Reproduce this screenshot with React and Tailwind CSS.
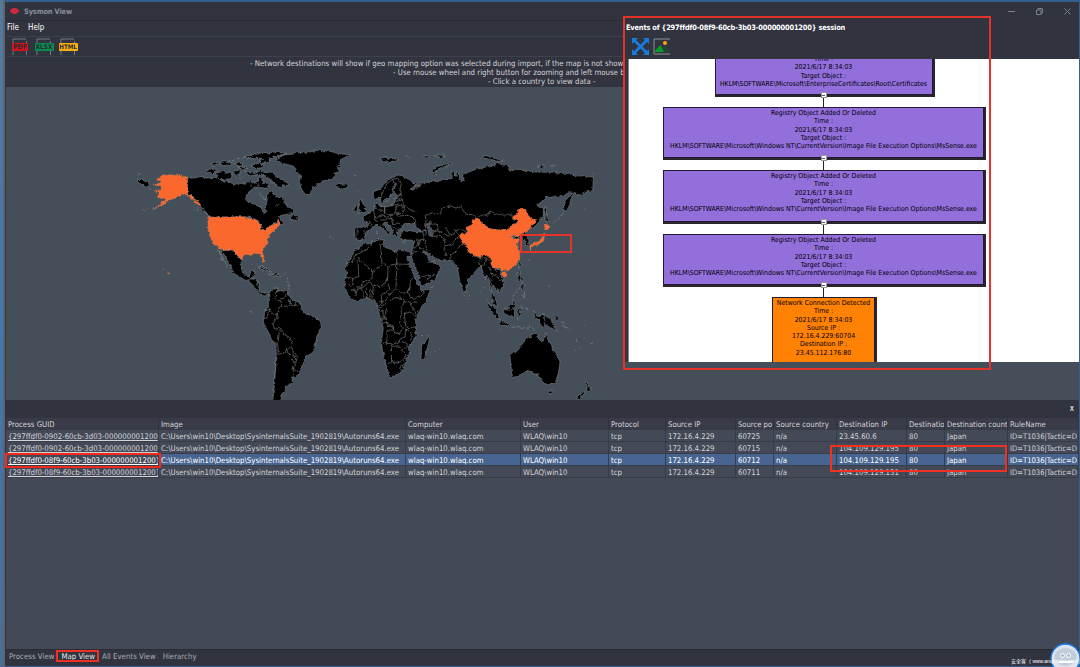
import React from "react";

const LAND = "fill-black stroke-[#8b8f92] [stroke-width:1.5]";
const HOT = "fill-[#fa682d] stroke-[#e98a62] [stroke-width:1]";
const LINE = "fill-none stroke-[#858585] [stroke-width:1.8]";
const ISLES = "fill-black stroke-[#989c9f] [stroke-width:1.5]";
const SEA = "fill-[#454f59] stroke-[#8b8f92] [stroke-width:1]";

function WorldMap() {
  return (
    <svg className="block h-[312px] w-[617px] shrink-0" viewBox="6 88 617 312">
      <defs>
        {/* Roughens the coast lines */}
        <filter id="coast" x="-5%" y="-5%" width="110%" height="110%">
          <feTurbulence type="fractalNoise" baseFrequency="0.09" numOctaves="3" seed="4" />
          <feDisplacementMap in="SourceGraphic" scale="11" xChannelSelector="R" yChannelSelector="G" />
        </filter>
      </defs>

      {/* North America */}
      <g transform="translate(130 140) scale(.33333)" strokeLinejoin="round" filter="url(#coast)">
        <polygon className={LAND} points="172,111 185,115 212,110 232,114 262,112 275,122 300,125 310,135 330,130 345,133 358,125 382,125 390,108 398,112 400,130 418,130 410,145 385,142 370,145 352,160 347,175 355,188 375,193 390,200 400,220 408,215 406,200 412,180 410,165 425,152 438,170 455,170 460,182 472,200 492,208 490,220 462,224 445,228 455,240 462,252 448,255 445,242 435,248 422,258 405,268 393,272 394,255 385,242 360,232 345,230 243,231 232,222 218,205 205,190 190,170 172,165" />
        <polygon className={HOT} points="172,111 172,165 160,163 148,168 135,172 125,182 120,178 105,190 68,208 95,190 110,178 100,176 82,170 88,158 76,153 92,146 94,140 72,134 85,130 95,125 78,118 95,108 120,104 150,108" />
        <path className={HOT} d="M173 165l14 4 10 12 10 7 6 8-10-2-8-10-12-10zM98 386l5 2M108 390l4 2M115 395l3 4-2 5-3-3zM38 213l6-2M52 206l8-1M120 184l5-6M55 146l8 2" />
        <polygon className={HOT} points="233,232 345,231 350,234 375,238 390,250 394,270 405,268 425,256 440,250 445,240 451,252 440,262 430,272 420,282 412,298 418,305 408,318 398,325 396,335 402,350 400,368 394,355 390,342 375,338 365,345 345,343 338,352 335,365 325,350 316,340 308,330 280,332 250,312 240,290 235,270" />
        <polygon className={LAND} points="272,328 280,332 308,330 316,340 325,350 333,362 335,390 345,408 358,410 362,395 375,390 372,408 362,415 364,420 385,425 390,445 375,440 355,422 345,420 325,408 308,398 305,382 290,355" />
        <path className={LINE} d="M263 326l8 16 8 20 14 18M267 330l10 22 10 18" />
        <path className={ISLES} d="M389 380l12 0 12 6 12 10-8-2-12-8-9-2zM430 400l14 1 10 8-12-1-10-2zM416 403l8 2M463 401l4 1M472 412l2 7M477 432l1 6M432 445l7-3 8 2M598 290h4M610 295h4" />
        {/* Arctic islands */}
        <path className={ISLES} d="M232 92l15-7 15 5-5 6-14 5-12-3zM256 100l24-6 8 6 14-4 4 12-3 8-26 3-19-5 6-8-8-3zM313 94l12-3 5 10-8 4 12 12-12-6zM345 96l14-2 14 7 18-9 14 6 20-2 6 8 10 9 8-2 10 12 10 3 8 7-7 4-13-3 2 9-12-3-15-12-12-4 6-5-12-8-5 4-8-10-22-2-8 6-14-3zM360 128l16 0 12 9-9 5-14-2zM242 72l12-5 10 3-8 8zM268 68l22-4 18 5-9 6-24 2zM314 73l9-5 14 4-6 7zM325 82l17-3 12 4-14 5zM340 52l22-7 21-3 16-5 20 2 27-5 21 6-16 6-13 0-12 9-12 2 5 5-10 7-15-1-7-6 11-4-20-6-16 3zM363 76l24-6 16 7-7 6-16 2zM302 59l14 1M318 53l12 3M298 66l4-3" />
        <polygon className={LAND} points="438,56 465,45 490,42 500,38 530,37 565,31 600,34 620,40 660,44 640,55 632,58 630,72 622,80 628,95 612,100 618,108 598,118 580,122 560,135 545,148 540,164 525,162 515,148 508,125 512,108 500,95 495,80 475,74 450,68" />
        <path className={LAND} d="M616 136l9-5 15 2 12-2 3 7-10 7-15 2-10-4zM22 117l11 2 20 8 5 6-4 7-10-4-10-4-10-5zM482 232l8-9 6 6 10 7-5 6-18-4z" />
        <path className={ISLES} d="M24 101l8 1M672 103h4M214 198l10 12 8 14-10-10M200 202l4 12M448 196l-10 2M404 180l-14-24" />
      </g>

      {/* Europe and Asia */}
      <g transform="translate(330 140) scale(.33333)" strokeLinejoin="round" filter="url(#coast)">
        <polygon className={LAND} points="130,155 130,170 138,178 150,172 155,188 162,184 172,172 190,165 196,185 190,197 165,200 148,200 144,190 136,192 134,206 122,215 108,225 98,232 102,240 112,246 112,262 78,262 73,270 76,295 88,301 100,298 108,280 125,264 138,256 150,258 158,266 172,277 172,285 181,280 170,266 158,252 165,246 180,258 187,270 190,285 200,288 200,274 212,270 214,262 224,250 238,252 252,250 262,262 278,276 262,276 240,272 214,276 211,292 220,300 240,300 252,302 250,318 246,335 243,350 256,380 268,410 272,440 315,420 332,382 318,368 300,365 292,350 280,335 284,333 305,347 330,362 345,362 370,365 382,378 385,400 390,425 398,450 403,465 411,440 413,420 435,395 450,378 470,390 480,378 520,380 560,340 560,300 590,275 598,268 612,262 628,245 640,225 640,205 622,198 625,192 640,182 650,172 680,170 700,168 712,160 722,155 730,158 720,168 706,180 700,195 703,215 717,202 722,180 728,165 735,158 750,165 760,158 788,152 790,112 760,108 735,108 715,100 690,100 665,97 640,97 610,96 595,92 575,92 560,88 535,92 540,78 520,75 505,68 495,75 480,78 455,84 430,90 415,98 400,102 398,110 403,120 393,125 388,112 385,98 380,95 378,110 370,95 365,98 367,115 355,117 340,118 325,125 310,122 290,127 275,130 270,140 258,142 250,150 240,148 258,135 245,125 235,118 215,108 205,105 190,112 175,120 160,135 150,148" />
        <polygon className={SEA} points="176,186 180,165 188,155 186,145 192,132 200,130 200,138 192,150 195,163 218,162 205,169 198,176 193,192 170,200 150,198 160,189 172,180" />
        <polygon className={SEA} points="288,250 300,244 306,250 300,258 310,275 308,290 298,288 293,270" />
        <polygon className={LAND} points="440,232 452,226 463,224 470,228 482,214 500,222 520,226 545,222 548,238 565,245 548,255 535,268 500,270 480,266 455,250" />
        <polygon className={HOT} points="388,286 410,278 408,262 425,256 427,243 438,232 450,240 455,250 480,266 500,270 535,268 548,255 560,250 565,243 548,238 550,228 563,222 562,210 575,205 588,210 595,226 604,236 617,238 614,250 604,258 598,268 590,275 583,280 573,282 566,290 557,288 554,295 568,298 557,310 568,330 569,352 560,370 545,384 528,392 515,388 508,383 495,388 486,385 480,378 483,362 478,350 466,344 452,352 430,346 415,336 410,318 395,305" />
        <polygon className={SEA} points="540,290 556,286 560,290 554,297 546,296" />
        <polygon className={LAND} points="573,282 590,277 591,290 597,300 595,315 588,318 585,302 578,292" />
        <path className={HOT} d="M642 256l8-3 10 7-8 10-8-2zM641 276l2 14-3 14-12 6-8 8-14 1-4 9-4-10 12-10 15-2 12-14zM518 397l9-2 1 10-5 7-5-6z" />
        {/* Britain, Iceland, Greenland's east tip and Arctic islands */}
        <path className={LAND} d="M88 184l9-6 0 12 8 8 5 14-7 6-20 2 9-9-3-9-4-5zM70 204l8-6 5 5-4 10-10 3z" />
        <path className={ISLES} d="M150 55l18-3 12 5 20-3 6 5-18 4-12 6-10-4-12 0zM226 49l10 2M278 49l14-2 8 4M310 48l16-3 20 3-12 4zM454 50l16-3 20 7 20 5 8 6-20-2-18-5-12-2zM622 78l14-2 12 3-14 3zM660 78l16 0M700 96l8 2M306 98l2-10 12-8 24-7 22-3 2 3-22 6-18 7-10 8-2 6 8 5-8-1zM790 105l0-5M645 200l4 9-1 20 5 14-4 5-4-9 1-17-4-12zM666 252l6-5M676 244l5-5M684 237l6-7M692 228l8-9M762 206l5 2M656 437h3M565 350l6-2M594 360l3 1M565 368l6 5-4 12zM566 403l7 6-3 16-5-8M136 296l10-2-2 6M140 272l1 10M216 306l10 1M80 153h3M8 296h3M60 305l4 1" />
        {/* National borders */}
        <path className={LINE} d="M152 172l8-18 10-22 18-14 18-4M206 116l8 14-4 18 6 16M188 118l6 16M130 206l4 18 0 16 10 6M134 206l12 0 18 8 0-14M164 214l-8 14-22 6M164 200l0 18 14 6 16-2 4-20M196 200l20-6 8 14-6 12-22 0M196 222l10 6 28-2 20 8 4 16M156 228l16 4 20-8M150 240l16 0 18-6 8 10M184 234l4 16 22 0M190 250l-8 10M188 262l14 6 12-2M196 185l20-5M194 176l20-2M190 196l18-4M216 165l4 30 20 14 16 6M112 246l16 10M100 268l6 14M82 268l-2 30M212 276l4-6M252 302l16-2 14-2 0-12-4-10M268 300l-4 18-14 6M282 298l6 20 4 16M264 318l18 16M246 338l18-6M270 270l20 6-6 12M284 276l4-26-2-24 20-8 26 4 2-16 28-8 16 6 14-4 14 22 18 2 14 8M306 252l16 0 2 20-14 4M324 272l16 8 14 8 16-4 6-12 32-2M310 290l18-4 14 8M342 294l4 22-4 12 6 20M346 318l18-4 14-18 10-8M358 362l6-18 16-12 12-18 16-2M360 284l-14-22M376 272l12 14M296 368l22-6M290 420l22-16M274 410l18-4 22 0M420 340l14 10 22 4M456 356l14-4M470 354l2 20M450 356l-2 18 10 4M480 376l-8 20M482 214l-16 12" />
      </g>

      {/* South America and Africa */}
      <g transform="translate(220 260) scale(.33333)" strokeLinejoin="round" filter="url(#coast)">
        <polygon className={LAND} points="148,98 160,88 175,85 170,95 182,92 203,95 205,105 218,120 240,128 242,145 255,160 280,170 300,182 304,198 290,230 285,260 278,278 255,292 250,310 237,335 232,350 218,350 216,360 218,372 195,380 198,388 188,395 185,412 178,426 157,426 158,395 162,365 167,320 170,252 155,240 145,215 132,195 130,180 135,155 145,140 145,118" />
        <polygon className={LAND} points="82,60 94,56 112,62 112,84 120,96 136,100 146,98 144,106 132,108 122,102 108,88 98,74" />
        <path className={LINE} d="M171 92l-5 10 2 17 15 4 2 17-11 5-4 20-11-4-16-15M180 117l12-2 8-12 5-8M190 140l18-4 4-15M205 115l10 21 9 2 4-14M223 135l12 1M134 152l12-2 6-7M146 155l-6 20-8-2M174 152l-4 22-11 18 5 15 14-1 7 4M178 210l-2 22-3 20 2 22-3 12-4 20-4 60-4 46M186 210l4 12 20 11 6 15-3 15-12 2-6 14-20 4M200 266l4 12 16 8 8 14-6 10-6-16M216 264l4 14 12 10-4 22-8 14 0 22M220 325l16 11" />
        <path className={ISLES} d="M115 21l14 2 15 9-9 0-12-6zM155 41l12 1 7 4-14 2zM176 46l6 1M203 63l2 10M207 82l0 7M89 155l8 1M344 66h4M140 40l6 2" />
        <polygon className={LAND} points="430,-50 450,-48 475,-60 492,-60 490,-46 495,-38 512,-32 525,-22 535,-30 548,-28 570,-24 574,-12 560,-10 568,15 580,40 588,65 600,82 605,92 630,88 628,102 610,135 595,155 588,172 587,195 588,228 575,250 565,260 568,280 558,300 552,320 540,340 512,350 506,345 500,320 488,275 484,245 490,205 485,180 478,165 474,145 470,125 455,118 440,112 405,125 385,105 376,85 374,68 380,40 376,22 392,-5 405,-30 425,-42" />
        <path className={LINE} d="M377 10l20-4 5-17 28-15 26-19-2-18M410-8l48 42-2 22-24 8-12 18-10-2M414 0l2 50-20 6M378 52l18 2 3 20-12 4M390 92l14-5 4 14M404 110l9-24 15 0 3 30M425 70l2 17M438 86l5 26M449 86l2 31M430 82l16-16 14 12-4 38M460 34l30-22 14 8-1 30-9 22-15 8-19-4M486 16l-2-42-3-18 10-6M504 18l24-6 40 1M530-25v51M503 50l-1 20 8 17-13 12-13 4 2 30-10 7M530 26l-2 60-16 12-14 23-21 5M528 87l18 12 14-1 10-18 2-20 10-8M574 78l-12 18 9 15 12 4 17-4 14-14M510 122l18-10 22 5 7 13 12-4M552 126l-8 22 0 29-6 12 9 14-6 18-17-2-5-18-17-2-3-24-14-4M470 136l14 8 14-18M480 162l9-12 1 25M500 144l-7 30-9 10M552 160l18-4 16 10M570 128l8 15 10 18M553 158l4 43 16 2 14-2M489 189l14-3 3 9 14 2M520 194l0 16-19 1-1 44M487 250l30 1 17-3 8-12 13-5 2-25M514 253l1 53-12 6M517 260l18-3 12 17 12 5-6 16-10 10-20 7-8-15M545 242l16 9 1 12-15 3M560 206l14 14-2 20M578 130l14-2M541 318l6-3 2 7-6 6-4-4z" />
        <polygon className={LAND} points="625,228 628,240 618,280 612,298 603,295 605,255 620,240" />
        <path className={ISLES} d="M656 266l2 2M646 273l3 1M457 151l2 1M606 226h3" />
      </g>

      {/* South-east Asia and Oceania */}
      <g transform="translate(400 230) scale(.33333)" strokeLinejoin="round" filter="url(#coast)">
        <polygon className={LAND} points="244,108 255,100 262,86 272,96 276,112 290,116 303,122 300,135 310,150 310,170 300,185 295,188 297,175 288,178 280,165 275,160 272,185 282,200 290,215 292,232 282,222 275,200 270,180 268,150 260,135 258,150 250,130" />
        <polygon className={LAND} points="330,375 355,360 365,345 378,325 395,323 392,315 405,310 415,315 412,325 425,335 433,330 437,308 443,328 455,345 458,362 472,378 480,395 475,430 465,460 445,464 430,460 422,445 415,440 412,430 405,436 398,425 385,423 365,428 355,438 338,442 335,430" />
        <polygon className={LAND} points="400,246 410,258 420,260 425,254 440,258 452,266 458,282 470,302 455,294 442,284 432,290 420,282 418,270 404,262" />
        <path className={LAND} d="M448 480l11 0-3 10-6 2zM559 455l5 8 2 8 8 1-10 14-4-6 2-10-6-9zM546 484l9 0-9 12-6 10-10 1 2-8 7-5zM261 211l9 9 12 16 12 15 5 18-10-6-12-18-12-17zM300 273l18 5 11 6 4 5-20-3-12-6zM312 237l14-2 12-12 2-16 6 10-4 12 2 12-3 19-14-2-11-9zM202 188l5 6 0 10-4 3z" />
        <path className={ISLES} d="M350 250l3-12 14-3M355 249l10 1-5 6 3 14M352 262l2 9M363 230l5 2M336 289l10 3M350 290l8 1M362 296l12-3M381 295l9-7M368 158l-6 12 6 14M361 140l8 3 0 17 6 8M374 184l-3 20M364 195l8 6 7 3M355 175l-8 14M344 193l-3 6M380 231l3 10M374 240l-4 4M396 244l8 1M398 292l5 8M467 255l8 8-5 12M483 275l8 4M488 284l5 7M496 291l8 3M505 298l7 6M528 328l4 9M540 350l-2 6M522 357l6 10M571 343l8-6M555 441l3 8M248 173l4 1M241 184h2M446 166h3M550 286l3 1M356 123l2 10-4 4 0-10M92 172l9-2M298 300l3 2" />
        <path className={LINE} d="M434 258v30M312 237l16 5 10-10M268 110l8 20 14 6 6 14 12 2M276 130l-4 30M284 112l6 18" />
      </g>
    </svg>
  );
}

function FormatIcon({ label, card }) {
  return (
    <div className="relative flex h-[18px] w-[20px] items-center justify-center">
      <svg viewBox="0 0 20 18" className="absolute inset-0 h-full w-full">
        <path d="M3 17V1h13M16.500 3v14" className="fill-none stroke-[#737980]" />
      </svg>
      <span className={"relative flex h-[8px] shrink-0 items-center justify-center rounded-[1px] font-bold leading-[8px] text-[#292b2e] " + card}>
        {label}
      </span>
    </div>
  );
}

function NodeBox({ lines, box, height }) {
  return (
    <div className={"relative shrink-0 border border-[#241a35] pt-[1px] text-center text-[6.9px] leading-[8.3px] text-black [box-shadow:1px_1px_0_1px_#28252d] " + box + " " + height}>
      {lines.map((line, i) => (
        <div key={i} className="whitespace-nowrap">{line}</div>
      ))}
    </div>
  );
}

function Connector() {
  return (
    <div className="relative z-10 flex h-[12px] w-[6px] shrink-0 justify-center">
      <div className="w-px bg-[#222]" />
      <div className="absolute -top-[3px] left-0 flex h-[6px] w-[6px] items-center justify-center border border-[#999] bg-white">
        <div className="h-px w-[3px] bg-[#557]" />
      </div>
    </div>
  );
}

const registry = [
  "Registry Object Added Or Deleted",
  "Time :",
  "2021/6/17 8:34:03",
  "Target Object :",
  "HKLM\\SOFTWARE\\Microsoft\\Windows NT\\CurrentVersion\\Image File Execution Options\\MsSense.exe",
];

function EventsPanel() {
  return (
    <section className="relative flex min-w-0 flex-1 flex-col">
      <div className="absolute -top-[68px] right-0 left-[2px] flex h-[342px] flex-col bg-[#31343f]">
        <h2 className="mt-[3px] ml-[1px] h-[15px] text-[7.4px] leading-[10px] font-bold tracking-[-0.175px] whitespace-nowrap text-white">
          Events of {"{297ffdf0-08f9-60cb-3b03-000000001200}"} session
        </h2>
        <div className="flex h-[21px] gap-[4px] pl-[7px]">
          <svg viewBox="0 0 17 17" className="h-[17px] w-[17px] fill-[#197bdc]">
            <path d="M0 0h6L4 2l4.500 4.500L13 2l-2-2h6v6l-2-2-4.500 4.500L15 13l2-2v6h-6l2-2-4.500-4.500L4 15l2 2H0v-6l2 2 4.500-4.500L2 4 0 6z" />
          </svg>
          <svg viewBox="0 0 17 17" className="h-[17px] w-[17px]">
            <path d="M17 1H1v15h16" className="fill-none stroke-[#8b9196]" />
            <path d="M2 13l5-6 3 4 2-2 4 4v1H2z" className="fill-[#079b29]" />
            <path d="M9 10l3-2 5 6h-6z" className="fill-[#20462e]" />
            <circle cx="12" cy="5" r="2" className="fill-[#fda414]" />
          </svg>
        </div>
        <div className="ml-[3px] flex h-[303px] flex-col overflow-hidden border-l border-[#888] bg-white">
          <div className="flex w-[389px] flex-col items-center">
            <NodeBox
              lines={["Time :", "2021/6/17 8:34:03", "Target Object :", "HKLM\\SOFTWARE\\Microsoft\\EnterpriseCertificates\\Root\\Certificates"]}
              box="mt-[-6px] w-[218px] bg-[#936fdc]"
              height="h-[42px]"
            />
            <Connector />
            <NodeBox lines={registry} box="w-[321px] bg-[#936fdc]" height="h-[51px]" />
            <Connector />
            <NodeBox lines={registry} box="w-[321px] bg-[#936fdc]" height="h-[52px]" />
            <Connector />
            <NodeBox lines={registry} box="w-[321px] bg-[#936fdc]" height="h-[51px]" />
            <Connector />
            <NodeBox
              lines={["Network Connection Detected", "Time :", "2021/6/17 8:34:03", "Source IP :", "172.16.4.229:60704", "Destination IP :", "23.45.112.176:80"]}
              box="w-[103px] bg-[#ff8205]"
              height="h-[80px]"
            />
          </div>
        </div>
      </div>
    </section>
  );
}

const columns = ["Process GUID", "Image", "Computer", "User", "Protocol", "Source IP", "Source po", "Source country", "Destination IP", "Destinatio", "Destination count", "RuleName"];
const exe = "C:\\Users\\win10\\Desktop\\SysinternalsSuite_1902819\\Autoruns64.exe";
const row = (guid, port, dest) => [guid, exe, "wlaq-win10.wlaq.com", "WLAQ\\win10", "tcp", "172.16.4.229", port, "n/a", dest, "80", "Japan", "ID=T1036|Tactic=D"];
const rows = [
  row("{297ffdf0-0902-60cb-3d03-000000001200", "60725", "23.45.60.6"),
  row("{297ffdf0-0902-60cb-3d03-000000001200", "60715", "104.109.129.195"),
  row("{297ffdf0-08f9-60cb-3b03-000000001200}", "60712", "104.109.129.195"),
  row("{297ffdf0-08f9-60cb-3b03-000000001200}", "60711", "104.109.129.131"),
];
const GRID = "grid grid-cols-[153px_247px_115px_88px_57px_70px_38px_63px_70px_38px_63px_1fr]";

function EventTable() {
  return (
    <div className="flex h-[231px] flex-col bg-[#434957] text-[7.75px] leading-[13px] text-[#d3d4d8]">
      <div className={GRID + " h-[12px] bg-[#393b48]"}>
        {columns.map((c, i) => (
          <div key={c} className={"overflow-hidden border-r border-[#30333e] pl-[2px] whitespace-nowrap " + (i === 6 || i === 10 ? "text-[7.6px]" : "")}>{c}</div>
        ))}
      </div>
      {rows.map((cells, r) => (
        <div key={r} className={GRID + " h-[12px] " + (r === 2 ? "bg-[#486591] text-white" : "")}>
          {cells.map((cell, c) => (
            <div
              key={c}
              className={
                "overflow-hidden border-r border-b border-[#383c49] pl-[2px] whitespace-nowrap " +
                (c === 0 ? "bg-[#434957] underline" : "") + (c === 11 ? "text-[7.6px]" : "")
              }
            >
              {cell}
            </div>
          ))}
        </div>
      ))}
    </div>
  );
}

export default function App() {
  return (
    <div className="relative flex h-[667px] w-[1080px] overflow-hidden bg-[#31343f] font-['DejaVu_Sans_Condensed','DejaVu_Sans',sans-serif] [font-stretch:condensed]">
      <div className="w-[3px] shrink-0 bg-linear-to-b from-[#54799e] via-[#3d78b8] to-[#466f9b]" />
      <div className="w-[2px] shrink-0 bg-[#60646a]" />
      <main className="flex min-w-0 flex-1 flex-col border-t-2 border-r border-b border-[#34608f] pl-px">
        <header className="flex h-[18px] items-center justify-between pt-px pr-[8px] pl-[4px] text-[#8a8e98]">
          <div className="flex items-center gap-[5px] text-[7.4px] font-bold">
            <svg viewBox="0 0 9 6" className="h-[6px] w-[9px]">
              <path d="M0 4Q0 1 3 0h3q3 1 3 4L7 5 6 6H3L2 5z" className="fill-[#cb2941]" />
            </svg>
            <span className="tracking-[-0.15px]">Sysmon View</span>
          </div>
          <div className="flex items-center gap-[21px]">
            <div className="h-px w-[7px] bg-[#7b808b]" />
            <svg viewBox="0 0 7 7" className="h-[7px] w-[7px] fill-none stroke-[#7b808b]"><path d="M.5 2h4.500v4.500H.5zM2 2V.5h4.500V5H5" /></svg>
            <svg viewBox="0 0 7 7" className="h-[7px] w-[7px] fill-none stroke-[#7b808b]"><path d="M.5.5l6 6M6.500.5l-6 6" /></svg>
          </div>
        </header>
        <nav className="flex h-[16px] items-center gap-[9px] border-t border-[#2a2d35] pb-[2px] pl-[1px] text-[8px] text-white">
          <span>File</span><span>Help</span>
        </nav>
        <div className="flex h-[21px] items-center gap-[4px] border-y border-[#3d414c] pl-[4px]">
          <FormatIcon label="PDF" card="bg-[#cf161d] w-[16px] text-[6.8px]" />
          <FormatIcon label="XLSX" card="bg-[#088c56] w-[19px] text-[6.5px]" />
          <FormatIcon label="HTML" card="bg-[#fdae17] w-[19px] text-[6.2px]" />
        </div>
        <div className="flex h-[30px] w-[617px] flex-col items-start pt-[2px] text-[7.8px] leading-[9.1px] text-[#d2d3d7]">
          <span className="pl-[244px] whitespace-nowrap">- Network destinations will show if geo mapping option was selected during import, if the map is not showi</span>
          <span className="pl-[387px] whitespace-nowrap">- Use mouse wheel and right button for zooming and left mouse b</span>
          <span className="pl-[482px] whitespace-nowrap">- Click a country to view data -</span>
        </div>
        <div className="flex h-[313px] bg-[#454f59] pt-px">
          <WorldMap />
          <EventsPanel />
        </div>
        <div className="flex h-[18px] items-center justify-end pr-[5px] text-[8px] text-white">x</div>
        <EventTable />
        <footer className="flex flex-1 items-center gap-[7px] border-t border-[#292c34] pb-[3px] pl-[3px] text-[7.8px] text-[#a8abb2]">
          <span>Process View</span>
          <span className="text-[#e3e4e8]">Map View</span>
          <span>All Events View</span>
          <span>Hierarchy</span>
        </footer>
      </main>

      {/* Highlight frames drawn over the window */}
      <div className="absolute top-[16px] left-[623px] h-[354px] w-[368px] border-2 border-[#e43429]" />
      <div className="absolute top-[234px] left-[520px] h-[19px] w-[52px] border-2 border-[#e43429]" />
      <div className="absolute top-[453px] left-[5px] h-[15px] w-[156px] border-2 border-[#ef2a1c]" />
      <div className="absolute top-[445px] left-[830px] h-[27px] w-[177px] border-2 border-[#ef3023]" />
      <div className="absolute top-[650px] left-[56px] h-[12px] w-[43px] border-2 border-[#ef3023]" />
      <svg viewBox="0 0 30 24" className="absolute bottom-0 left-[1050px] h-[24px] w-[30px]">
        <circle cx="15.500" cy="15.500" r="14.500" className="fill-[#dce3ed] stroke-[#1879e6] [stroke-width:1.3]" />
        <ellipse cx="15.500" cy="14" rx="11" ry="9" className="fill-[#c3ccda]" />
        <circle cx="12.500" cy="12.500" r="2" className="fill-[#aab5c7] stroke-white" />
        <circle cx="18.500" cy="12.500" r="2" className="fill-[#aab5c7] stroke-white" />
        <path d="M9 19h14" className="stroke-white [stroke-width:2]" />
      </svg>
      <div className="absolute bottom-[2px] left-[1011px] font-['Liberation_Sans','Noto_Sans_CJK_SC',sans-serif] text-[5px] leading-[8px] whitespace-nowrap text-white">安全客（ www.anquanke.com ）</div>
    </div>
  );
}
